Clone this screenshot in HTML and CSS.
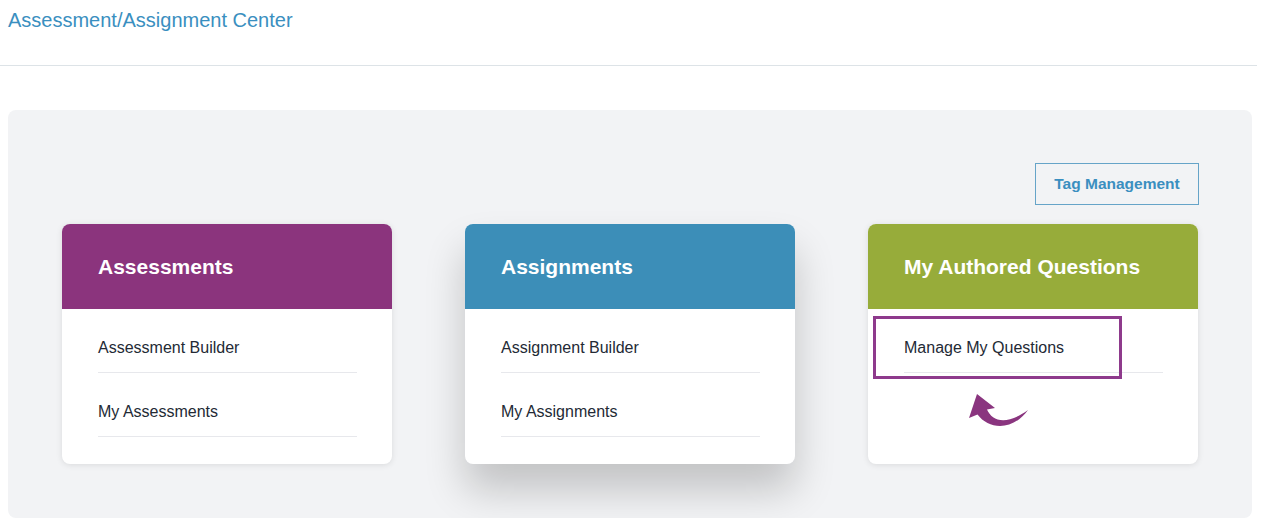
FILE: index.html
```html
<!DOCTYPE html>
<html lang="en">
<head>
  <meta charset="UTF-8">
  <title>Assessment/Assignment Center</title>
  <link rel="stylesheet" href="styles.css">
</head>
<body>
  <div class="page">
    <header class="top">
      <h1 class="page-title">Assessment/Assignment Center</h1>
    </header>

    <section class="panel">
      <div class="toolbar">
        <button class="tag-btn">Tag Management</button>
      </div>

      <div class="cards">
        <div class="card">
          <div class="card-head purple">Assessments</div>
          <ul class="card-list">
            <li>Assessment Builder</li>
            <li>My Assessments</li>
          </ul>
        </div>

        <div class="card hover">
          <div class="card-head blue">Assignments</div>
          <ul class="card-list">
            <li>Assignment Builder</li>
            <li>My Assignments</li>
          </ul>
        </div>

        <div class="card">
          <div class="card-head green">My Authored Questions</div>
          <ul class="card-list">
            <li>Manage My Questions</li>
          </ul>
          <div class="highlight"></div>
          <svg class="arrow" width="66" height="40" viewBox="0 0 66 40">
            <path d="M12 2 L30 16 L22 17.5 C27 29 41 34 63 18 C48 39 24 38 12.5 22.5 L4 26 Z" fill="#8a357f"/>
          </svg>
        </div>
      </div>
    </section>
  </div>
</body>
</html>
```

FILE: styles.css
```css
body {
  margin: 0;
  background: #fff;
  font-family: "Liberation Sans", Arial, sans-serif;
  color: #222;
}

.page {
  width: 1257px;
}

.top {
  height: 65px;
  border-bottom: 1px solid #dde3e7;
  padding: 0 8px;
}

.page-title {
  margin: 0;
  padding-top: 9px;
  font-size: 20px;
  font-weight: normal;
  color: #3a8fc0;
}

.panel {
  margin: 44px 5px 0 8px;
  background: #f2f3f5;
  border-radius: 8px;
  padding: 53px 54px 54px;
}

.toolbar {
  display: flex;
  justify-content: flex-end;
  margin: 0 -1px 19px 0;
}

.tag-btn {
  width: 164px;
  height: 42px;
  background: transparent;
  border: 1.5px solid #66a4c8;
  color: #3a8fc0;
  font-family: "Liberation Sans", Arial, sans-serif;
  font-size: 15.5px;
  font-weight: bold;
}

.cards {
  display: grid;
  grid-template-columns: repeat(3, 330px);
  justify-content: space-between;
}

.card {
  position: relative;
  background: #fff;
  border-radius: 8px;
  box-shadow: 0 1px 6px rgba(0, 0, 0, 0.1);
}

.card.hover {
  box-shadow: 0 26px 40px rgba(0, 0, 0, 0.2);
}

.card-head {
  height: 85px;
  display: flex;
  align-items: center;
  padding-left: 36px;
  border-radius: 8px 8px 0 0;
  color: #fff;
  font-size: 21px;
  font-weight: bold;
}

.purple { background: #8b347d; }
.blue { background: #3c8eb8; }
.green { background: #97ac3a; }

.card-list {
  list-style: none;
  margin: 0;
  padding: 0 35px 27px 36px;
}

.card-list li {
  padding: 29px 0 14px;
  line-height: 20px;
  font-size: 16px;
  color: #232a35;
  border-bottom: 1px solid #e7e8ec;
}

.highlight {
  position: absolute;
  left: 5px;
  top: 92px;
  width: 243px;
  height: 57px;
  border: 3px solid #8e3a8c;
}

.arrow {
  position: absolute;
  left: 97px;
  top: 168px;
}
```
